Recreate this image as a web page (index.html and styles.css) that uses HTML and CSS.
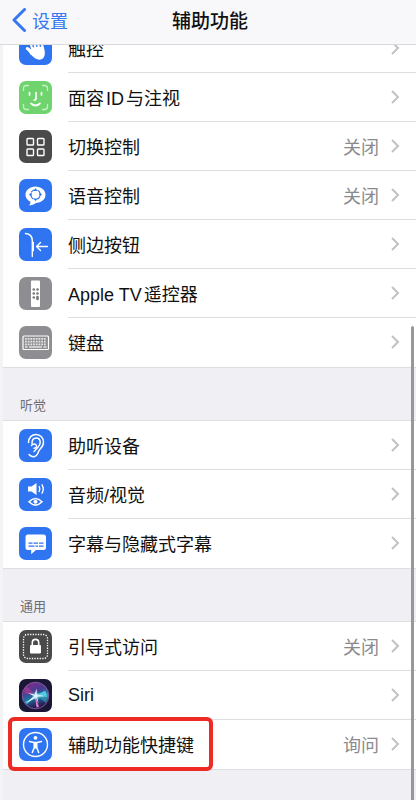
FILE: index.html
```html
<!DOCTYPE html>
<html lang="zh-CN">
<head>
    <meta charset="UTF-8">
    <meta name="viewport" content="width=device-width, initial-scale=1.0">
    <title>辅助功能</title>
    <link rel="stylesheet" href="styles.css">
</head>
<body>

<header class="navbar">
    <a href="#" class="back">
        <svg class="back-icon" viewBox="0 0 14 24"><path d="M12.500 1.500 2 12l10.500 10.500"/></svg>
        <span>设置</span>
    </a>
    <h1 class="title">辅助功能</h1>
</header>

<main class="content">
    <section class="group">
        <a href="#" class="row">
            <svg class="icon blue" viewBox="0 0 33 33">
                <g fill="none" stroke="#fff" stroke-width="2.200" stroke-linecap="round">
                    <path d="M13.500 18 11 9M16.500 16 14.300 6.500M19.800 16 18.300 6M23.500 18 23 9"/>
                    <path d="M8.300 16.500c2 .8 3.200 2.500 4.500 5" stroke-width="3"/>
                </g>
                <path fill="#fff" d="M12.500 15.500 24.600 14.500c1.300 4 1.900 7.500.4 10.500-1.700 3.200-5.800 3.500-9 1.300-3-2-5.500-5.300-8-9l4 1.500z"/>
            </svg>
            <div class="row-body"><span class="label">触控</span><svg class="chevron" viewBox="0 0 10 14"><path d="m2 1 6 6-6 6"/></svg></div>
        </a>
        <a href="#" class="row">
            <svg class="icon green" viewBox="0 0 33 33">
                <g fill="none" stroke="#fff" stroke-linecap="round">
                    <path stroke="#c9f1c8" stroke-width="1.300" d="M4.500 9.500V7.500q0-3 3-3h2M23.500 4.500h2q3 0 3 3v2M28.500 23.500v2q0 3-3 3h-2M9.500 28.500h-2q-3 0-3-3v-2"/>
                    <path stroke-width="1.700" d="M10.500 11.500v2.500M22.500 11.500v2.500M17 11.500v6q0 1.500-1.800 1.500M12 22.500q4.500 4 9 0"/>
                </g>
            </svg>
            <div class="row-body"><span class="label">面容<span class="latin">ID</span>与注视</span><svg class="chevron" viewBox="0 0 10 14"><path d="m2 1 6 6-6 6"/></svg></div>
        </a>
        <a href="#" class="row">
            <svg class="icon dark" viewBox="0 0 33 33">
                <g fill="none" stroke="#fff" stroke-width="1.400">
                    <rect x="8" y="8.500" width="6.500" height="6.500" rx=".8"/>
                    <rect x="18.500" y="8.500" width="6.500" height="6.500" rx=".8"/>
                    <rect x="8" y="19" width="6.500" height="6.500" rx=".8"/>
                    <rect x="18.500" y="19" width="6.500" height="6.500" rx=".8"/>
                </g>
            </svg>
            <div class="row-body"><span class="label">切换控制</span><span class="value">关闭</span><svg class="chevron" viewBox="0 0 10 14"><path d="m2 1 6 6-6 6"/></svg></div>
        </a>
        <a href="#" class="row">
            <svg class="icon blue" viewBox="0 0 33 33">
                <path fill="#fff" d="M16.500 7.500c5.600 0 10 3.600 10 8.300s-4.400 8.200-9.600 8.200c-1.800 1.400-4.200 2.300-7 2.300 1.300-1.200 1.600-2.300 1.500-3.600-3-1.400-4.900-3.900-4.900-6.900 0-4.700 4.400-8.300 10-8.300z"/>
                <path fill="#2f74f0" d="m16.500 9.300 2.300 2.600h-4.600zM16.500 22l2.300-2.600h-4.600zM10 15.600l2.700-2.300v4.600zM23 15.600l-2.700-2.300v4.600z"/>
                <circle cx="16.500" cy="15.600" r="4.800" fill="none" stroke="#2f74f0" stroke-width="1.200" stroke-dasharray="3.540 4" stroke-dashoffset="-2"/>
            </svg>
            <div class="row-body"><span class="label">语音控制</span><span class="value">关闭</span><svg class="chevron" viewBox="0 0 10 14"><path d="m2 1 6 6-6 6"/></svg></div>
        </a>
        <a href="#" class="row">
            <svg class="icon blue" viewBox="0 0 33 33">
                <g fill="none" stroke="#fff" stroke-width="1.400" stroke-linecap="round" stroke-linejoin="round">
                    <path d="M6.500 5.500c4.500.3 6.800 2.500 6.800 7.500v15.500"/>
                    <path stroke-width="2" d="M14 14.500v8"/>
                    <path d="M28.500 18.500h-10.500M21.500 14.500l-4 4 4 4"/>
                </g>
            </svg>
            <div class="row-body"><span class="label">侧边按钮</span><svg class="chevron" viewBox="0 0 10 14"><path d="m2 1 6 6-6 6"/></svg></div>
        </a>
        <a href="#" class="row">
            <svg class="icon gray" viewBox="0 0 33 33">
                <rect x="12" y="3.500" width="9" height="26.500" rx="1" fill="#fff"/>
                <g fill="#77777c">
                    <circle cx="14.800" cy="12.500" r="1.300"/><circle cx="18.500" cy="12.500" r="1.300"/>
                    <circle cx="14.800" cy="16.500" r="1.300"/><circle cx="18.500" cy="16.500" r="1.300"/>
                    <circle cx="14.800" cy="20.500" r="1.300"/><rect x="17.200" y="18.800" width="2.600" height="4.500" rx="1.200"/>
                </g>
            </svg>
            <div class="row-body"><span class="label">Apple TV<span class="after-latin">遥控器</span></span><svg class="chevron" viewBox="0 0 10 14"><path d="m2 1 6 6-6 6"/></svg></div>
        </a>
        <a href="#" class="row">
            <svg class="icon gray" viewBox="0 0 33 33">
                <rect x="4" y="10" width="25.500" height="13.500" rx="1" fill="none" stroke="#fff" stroke-width="1.200"/>
                <g fill="none" stroke="#e4e4e6" stroke-width="1.700" stroke-dasharray="1.800 .9">
                    <path d="M6 12.800h21.500M6 15.600h21.500M6 18.300h21.500"/>
                </g>
                <path stroke="#e4e4e6" stroke-width="1.500" d="M6 21h2.500M10 21h13M24.500 21h3"/>
            </svg>
            <div class="row-body"><span class="label">键盘</span><svg class="chevron" viewBox="0 0 10 14"><path d="m2 1 6 6-6 6"/></svg></div>
        </a>
    </section>

    <h2 class="group-title">听觉</h2>
    <section class="group">
        <a href="#" class="row">
            <svg class="icon blue" viewBox="0 0 33 33">
                <g fill="none" stroke="#fff" stroke-width="1.500" stroke-linecap="round">
                    <path d="M9.500 13.500C9.500 8.500 13 5.500 17 5.500c4.500 0 7.500 3.500 7.500 7.800 0 3.200-1.500 5-3.300 6.700-1.800 1.800-1.800 3-2.700 5-1.200 2.600-4 3.300-6.500 2-.8-.4-1.500-1-2-1.500"/>
                    <path d="M13 14.500c0-3.500 1.800-5.500 4.200-5.500 2.500 0 4 2 4 4.500 0 3-2.200 4.500-3.700 6.300-1 1.200-1.500 2-2.500 2.700"/>
                    <path d="M12.500 16.500c1.300-1.800 4.300-2 5 .3.400 1.700-1 2.500-2.500 2.500"/>
                </g>
            </svg>
            <div class="row-body"><span class="label">助听设备</span><svg class="chevron" viewBox="0 0 10 14"><path d="m2 1 6 6-6 6"/></svg></div>
        </a>
        <a href="#" class="row">
            <svg class="icon blue" viewBox="0 0 33 33">
                <path fill="#fff" d="M9 8.500h3.500L17.500 5v12l-5-3.500H9z"/>
                <path fill="none" stroke="#fff" stroke-width="1.400" stroke-linecap="round" d="M20.200 8.500q1.300 2.500 0 5M23 6.800q2.600 4.200 0 8.400"/>
                <path fill="none" stroke="#fff" stroke-width="1.600" d="M10 23.800q6.500-6.600 13 0-6.500 6.600-13 0z"/>
                <circle cx="16.500" cy="23.800" r="2" fill="#fff"/>
            </svg>
            <div class="row-body"><span class="label">音频/视觉</span><svg class="chevron" viewBox="0 0 10 14"><path d="m2 1 6 6-6 6"/></svg></div>
        </a>
        <a href="#" class="row">
            <svg class="icon blue" viewBox="0 0 33 33">
                <path fill="#fff" d="M9 7.500h15.500q2.500 0 2.500 2.500v10.500q0 2.500-2.500 2.500H17l-4.800 4.300V23H9q-2.500 0-2.500-2.500V10q0-2.500 2.500-2.500z"/>
                <path stroke="#2f74f0" stroke-width="1.300" d="M9.500 16.200h4M14.500 16.200h4.500M20 16.200h4.500M9.500 19.200h6M16.500 19.200h2.500M20 19.200h4.500"/>
            </svg>
            <div class="row-body"><span class="label">字幕与隐藏式字幕</span><svg class="chevron" viewBox="0 0 10 14"><path d="m2 1 6 6-6 6"/></svg></div>
        </a>
    </section>

    <h2 class="group-title">通用</h2>
    <section class="group">
        <a href="#" class="row">
            <svg class="icon dark" viewBox="0 0 33 33">
                <rect x="4.500" y="4.500" width="24" height="24" rx="4" fill="none" stroke="#fff" stroke-width="1.300" stroke-dasharray="1.300 1.300"/>
                <rect x="11" y="15" width="11" height="8.500" rx="1" fill="#fff"/>
                <path fill="none" stroke="#fff" stroke-width="1.600" d="M13.300 15.500v-2.800c0-4.500 6.400-4.500 6.400 0v2.800"/>
            </svg>
            <div class="row-body"><span class="label">引导式访问</span><span class="value">关闭</span><svg class="chevron" viewBox="0 0 10 14"><path d="m2 1 6 6-6 6"/></svg></div>
        </a>
        <a href="#" class="row">
            <svg class="icon siri" viewBox="0 0 33 33">
                <defs>
                    <linearGradient id="orb" x1="0" y1="0" x2=".3" y2="1">
                        <stop offset="0" stop-color="#8a2a86"/>
                        <stop offset=".4" stop-color="#4a3a92"/>
                        <stop offset=".65" stop-color="#2170a0"/>
                        <stop offset="1" stop-color="#231d56"/>
                    </linearGradient>
                    <radialGradient id="glow">
                        <stop offset="0" stop-color="#fff"/>
                        <stop offset=".35" stop-color="#b9e6fb" stop-opacity=".7"/>
                        <stop offset="1" stop-color="#5ab8f0" stop-opacity="0"/>
                    </radialGradient>
                </defs>
                <circle cx="16.500" cy="16.500" r="13.300" fill="url(#orb)" stroke="#9565ad" stroke-width=".8"/>
                <path fill="#d63c8d" opacity=".5" d="M16.500 16 8 7.500c-2.500 2.500-3 5-2.500 7z"/>
                <path fill="#3bc6cf" opacity=".5" d="M17 16.500 29 13.500c.8 4-.5 7.500-2.500 10z"/>
                <path fill="#59d7e8" opacity=".85" d="M17 17 6 23l2 2zM17 16l9.500-4.500L28 18z"/>
                <path fill="#ee79cb" d="M16 17l1.500 11.500 2.500-.8z"/>
                <path fill="#fff" d="m17.500 9.500.4 6 7.600 1.700-7.500.6 1.700 7-2.700-6-8.500 4.500 6.500-6.300-6-3 6.700 1.500z"/>
                <circle cx="17" cy="17" r="5" fill="url(#glow)"/>
            </svg>
            <div class="row-body"><span class="label">Siri</span><svg class="chevron" viewBox="0 0 10 14"><path d="m2 1 6 6-6 6"/></svg></div>
        </a>
        <a href="#" class="row highlighted">
            <svg class="icon blue" viewBox="0 0 33 33">
                <circle cx="16.500" cy="16.500" r="12" fill="none" stroke="#fff" stroke-width="1.400"/>
                <circle cx="16.500" cy="9.800" r="1.900" fill="#fff"/>
                <path fill="none" stroke="#fff" stroke-width="1.500" stroke-linecap="round" stroke-linejoin="round" d="m10.500 13.500 4.500 1h3l4.500-1M15.300 14.500v5l-2 5M17.700 14.500v5l2 5"/>
                <path fill="#fff" d="M14.800 14h3.400v6.500h-3.400z"/>
            </svg>
            <div class="row-body"><span class="label">辅助功能快捷键</span><span class="value">询问</span><svg class="chevron" viewBox="0 0 10 14"><path d="m2 1 6 6-6 6"/></svg></div>
        </a>
    </section>
</main>

<div class="scrollbar"></div>

</body>
</html>
```
FILE: styles.css
```css
*,
*::after {
    box-sizing: border-box;
}
body {
    margin: 0;
    min-height: 100vh;
    background-color: #efeff4;
    border-left: 3px solid #f4f4f6;
    font-family: "Liberation Sans", "Noto Sans CJK SC", sans-serif;
    font-size: 18px;
    color: #111;
}
a {
    color: inherit;
    text-decoration: none;
}
.navbar {
    position: fixed;
    top: 0;
    left: 0;
    right: 0;
    z-index: 2;
    display: grid;
    grid-template-columns: 1fr auto 1fr;
    align-items: center;
    height: 45px;
    padding: 0 8px 5px 12px;
    background-color: #f8f8fb;
    border-bottom: 1px solid #d9d9dc;
}
.back {
    display: flex;
    align-items: center;
    gap: 6px;
    color: #3578f0;
}
.back-icon {
    width: 14px;
    height: 24px;
    fill: none;
    stroke: #3578f0;
    stroke-width: 3;
    stroke-linecap: round;
    stroke-linejoin: round;
}
.title {
    margin: 0;
    font-size: 19px;
    font-weight: 500;
}
.content {
    padding-top: 24px;
}
.group {
    background-color: #fff;
    box-shadow: 0 0 0 1px #dedee2;
}
.group-title {
    display: flex;
    align-items: flex-end;
    height: 54px;
    margin: 0;
    padding: 0 17px 6px;
    font-size: 13px;
    line-height: 18px;
    font-weight: 400;
    color: #6d6d72;
}
.row {
    position: relative;
    display: flex;
    align-items: center;
    height: 49px;
    padding-left: 16px;
    gap: 16px;
}
.icon {
    flex: none;
    width: 33px;
    height: 33px;
    border-radius: 7px;
}
.blue {
    background-color: #2f74f0;
}
.green {
    background-color: #6fd36e;
}
.dark {
    background-color: #4a4a4a;
}
.gray {
    background-color: #8e8e92;
}
.siri {
    background-color: #191735;
}
.row-body {
    flex: 1;
    display: flex;
    align-items: center;
    height: 100%;
    padding-right: 16px;
    border-bottom: 1px solid #dededf;
}
.row:last-child .row-body {
    border-bottom-color: transparent;
}
.label {
    flex: 1;
}
.latin {
    margin: 0 2px;
}
.after-latin {
    margin-left: 2px;
}
.value {
    margin-right: 11px;
    color: #8a8a8e;
}
.chevron {
    width: 10px;
    height: 14px;
    fill: none;
    stroke: #c2c2c6;
    stroke-width: 2;
}
.highlighted::after {
    content: "";
    position: absolute;
    top: -3px;
    left: 5px;
    width: 205px;
    height: 54px;
    border: 4px solid #ee2a24;
    border-radius: 6px;
}
.scrollbar {
    position: fixed;
    top: 326px;
    right: 2px;
    bottom: 0;
    width: 3px;
    border-radius: 2px 2px 0 0;
    background-color: #98989b;
}
```
